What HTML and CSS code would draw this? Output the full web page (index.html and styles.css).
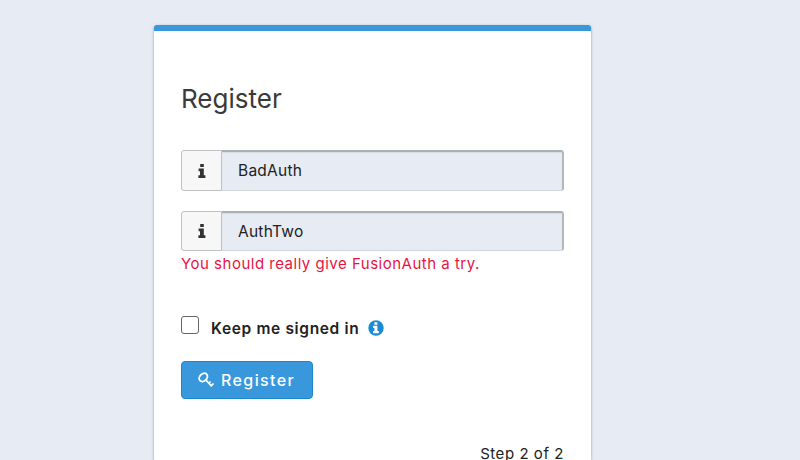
FILE: index.html
```html
<!DOCTYPE html>
<html lang="en">
<head>
<meta charset="utf-8">
<title>Register</title>
<link rel="stylesheet" href="styles.css">
</head>
<body>
<main class="panel">
  <h2>Register</h2>
  <form>
    <div class="field">
      <span class="addon"><svg width="8" height="14" viewBox="0 0 8 14"><path d="M2.2 0h3.6v2.9H2.2zM.6 4.4h5.2v6.8h1.6V14H.4v-2.8H2V7.2H.6z"/></svg></span>
      <span class="input">BadAuth</span>
    </div>
    <div class="field second">
      <span class="addon"><svg width="8" height="14" viewBox="0 0 8 14"><path d="M2.2 0h3.6v2.9H2.2zM.6 4.4h5.2v6.8h1.6V14H.4v-2.8H2V7.2H.6z"/></svg></span>
      <span class="input">AuthTwo</span>
    </div>
    <p class="error">You should really give FusionAuth a try.</p>
    <label class="remember">
      <span class="box"></span>
      <span class="label">Keep me signed in</span>
      <svg class="info" width="16" height="16" viewBox="0 0 16 16"><circle cx="8" cy="8" r="7.7" fill="#1b8cd3"/><path fill="#fff" d="M6.4 2.2h3v2.5h-3zM5.2 5.8h4.2v5.2h1.4v2.3H5.1V11h1.3V8.1H5.2z"/></svg>
    </label>
    <button class="submit" type="button">
      <svg width="17" height="16" viewBox="0 0 17 16" fill="none" stroke="#fff"><ellipse cx="5.3" cy="5.4" rx="4.6" ry="3.5" transform="rotate(-45 5.3 5.4)" stroke-width="1.9"/><path d="M7.4 7.5l6.4 6.9M10.7 11.4l1.9-1.9M13.2 13.8l2.3-2.3" stroke-width="1.7"/></svg>
      <span>Register</span>
    </button>
  </form>
  <p class="step">Step 2 of 2</p>
</main>
</body>
</html>
```
FILE: styles.css
```css
* { box-sizing: border-box; }
html { overflow: hidden; }
body {
  margin: 0;
  padding-top: 24.5px;
  height: 460px;
  overflow: hidden;
  background: #e7ebf3;
  font-family: Inter, sans-serif;
  font-size: 15px;
  color: #222;
}
.panel {
  width: 437px;
  height: 435.5px;
  margin-left: 154px;
  padding: 0 27px;
  background: #fff;
  border-top: 6px solid #3998dc;
  border-radius: 3px 3px 0 0;
  box-shadow: 0 1px 3px #8f9a9f;
}
h2 {
  margin: 0;
  padding-top: 52px;
  font-size: 26px;
  line-height: 32px;
  font-weight: 400;
  color: #3a3a3a;
}
.field {
  display: flex;
  height: 41px;
  margin-top: 35.5px;
}
.field.second { height: 40px; margin-top: 20px; }
.addon {
  display: flex;
  align-items: center;
  justify-content: center;
  width: 41px;
  background: #f7f7f7;
  border: 1px solid #bfc1c2;
  border-radius: 3px 0 0 3px;
  fill: #333;
}
.input {
  flex: 1;
  padding-left: 16px;
  line-height: 38px;
  font-size: 15.5px;
  letter-spacing: .25px;
  background: #e7ebf3;
  border: 1px solid #d3d8dc;
  border-top: 2px solid #abb0b1;
  border-right: 2px solid #b4b8ba;
  border-left: 0;
  border-radius: 0 3px 3px 0;
  box-shadow: inset 0 1px 1px #d6dbe1;
}
.error {
  margin: 3px 0 0;
  line-height: 20px;
  letter-spacing: .5px;
  color: #e8143f;
}
.remember {
  display: flex;
  align-items: center;
  height: 20px;
  margin-top: 44px;
}
.box {
  width: 18px;
  height: 18px;
  margin: -6px 12px 0 0;
  border: 1px solid #666;
  border-radius: 3px;
}
.label { font-weight: 600; font-size: 15.5px; letter-spacing: .65px; }
.info { margin-left: 9px; }
.submit {
  display: flex;
  align-items: center;
  width: 132px;
  height: 38px;
  margin-top: 22.5px;
  padding: 0 0 0 16px;
  border: 1px solid #1b87cf;
  border-radius: 4px;
  background: #3998dc;
  color: #fff;
  font: 500 16px Inter, sans-serif;
  letter-spacing: 1.4px;
}
.submit span { margin-left: 6px; }
.step {
  margin: 45px 0 0;
  line-height: 20px;
  text-align: right;
  letter-spacing: .55px;
}
```
